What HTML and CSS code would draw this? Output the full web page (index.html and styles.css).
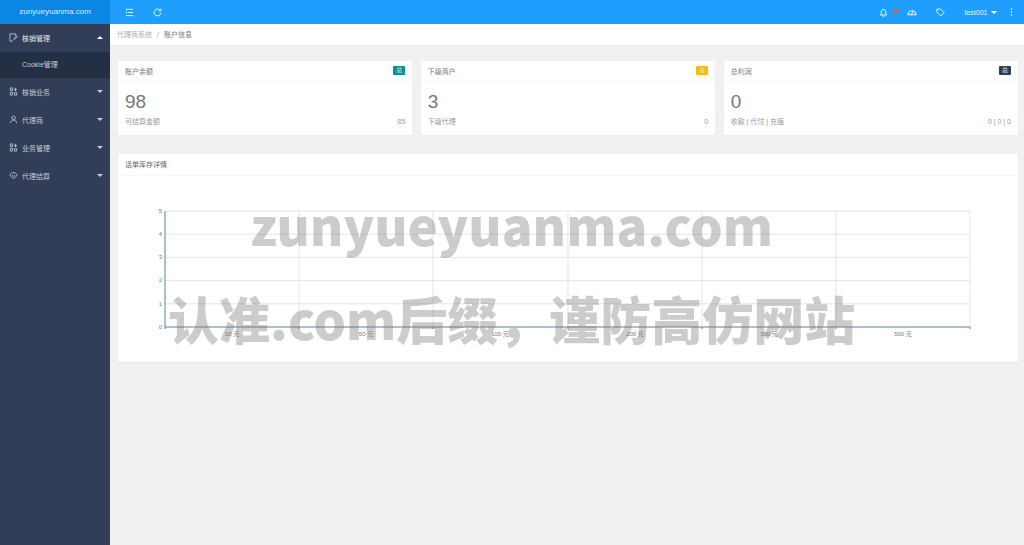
FILE: index.html
```html
<!DOCTYPE html>
<html lang="en">
<head>
  <meta charset="UTF-8">
  <meta name="viewport" content="width=device-width, initial-scale=1.0">
  <title>账户信息</title>
  <link rel="stylesheet" href="styles.css">
</head>
<body>

  <!-- Sidebar -->
  <aside class="sidebar">
    <div class="logo">zunyueyuanma.com</div>
    <ul class="menu">
      <li class="menu-item open">
        <svg class="menu-icon" viewBox="0 0 10 10"><path d="M7.500 3.500V1H1V9H4.500M5.500 6L8.500 3 9.500 4 6.500 7H5.500Z"/></svg>
        <span>核销管理</span><i class="caret up"></i>
      </li>
      <li class="menu-sub">Cookie管理</li>
      <li class="menu-item">
        <svg class="menu-icon" viewBox="0 0 10 10"><path d="M1.500 1H4V4H1.500ZM1.500 6H4V9H1.500ZM6 6H8.500V9H6ZM7.200 1V4.500M5.500 2.700H9"/></svg>
        <span>核销业务</span><i class="caret"></i>
      </li>
      <li class="menu-item">
        <svg class="menu-icon" viewBox="0 0 10 10"><circle cx="5" cy="3.200" r="2"/><path d="M1.500 9C1.800 6.800 3.200 5.800 5 5.800S8.200 6.800 8.500 9"/></svg>
        <span>代理商</span><i class="caret"></i>
      </li>
      <li class="menu-item">
        <svg class="menu-icon" viewBox="0 0 10 10"><path d="M1.500 1H4V4H1.500ZM1.500 6H4V9H1.500ZM6 6H8.500V9H6ZM7.200 1V4.500M5.500 2.700H9"/></svg>
        <span>业务管理</span><i class="caret"></i>
      </li>
      <li class="menu-item">
        <svg class="menu-icon" viewBox="0 0 10 10"><path d="M3 2H7L9.300 4.400 5 8.800 .7 4.400ZM3.300 4.500L5 6.200 6.700 4.500"/></svg>
        <span>代理结算</span><i class="caret"></i>
      </li>
    </ul>
  </aside>

  <div class="main">
    <!-- Top bar -->
    <header class="topbar">
      <svg class="top-icon menu-toggle" viewBox="0 0 10 10"><path d="M1 1.500H9M3.500 5H9M1 8.500H9M1 3.800L2.300 5 1 6.200"/></svg>
      <svg class="top-icon refresh" viewBox="0 0 10 10"><path d="M8.300 3A3.800 3.800 0 1 0 8.800 5.600M8.800 .8V3.300H6.300"/></svg>
      <div class="top-right">
        <svg class="top-icon bell" viewBox="0 0 10 10"><path d="M1.500 7.800H8.500L7.600 6.500V4.200A2.600 2.600 0 0 0 2.400 4.200V6.500ZM4 9.200H6"/></svg>
        <span class="dot"></span>
        <svg class="top-icon palette" viewBox="0 0 10 10"><path d="M1 7.800A4 4 0 0 1 9 7.800ZM4.200 7.500L6.500 4M2.700 6H2.900M3.800 4H4M7.200 6H7.400"/></svg>
        <svg class="top-icon tag" viewBox="0 0 10 10"><path d="M1 1.200H5L9 5.200 5.500 8.800 1 4.800ZM3 3H3.100"/></svg>
        <span class="user">test001</span><i class="caret user-caret"></i>
        <span class="more"><b></b><b></b><b></b></span>
      </div>
    </header>

    <nav class="breadcrumb">
      <span class="crumb">代理商系统</span><span class="crumb-sep">/</span><span class="crumb-now">账户信息</span>
    </nav>

    <div class="content">
      <div class="cards">
        <section class="card">
          <div class="card-head"><span>账户余额</span><em class="badge green">总</em></div>
          <div class="card-body">
            <p class="card-num">98</p>
            <div class="card-foot"><span>可结算金额</span><span>85</span></div>
          </div>
        </section>
        <section class="card">
          <div class="card-head"><span>下级商户</span><em class="badge yellow">总</em></div>
          <div class="card-body">
            <p class="card-num">3</p>
            <div class="card-foot"><span>下级代理</span><span>0</span></div>
          </div>
        </section>
        <section class="card">
          <div class="card-head"><span>总利润</span><em class="badge navy">总</em></div>
          <div class="card-body">
            <p class="card-num">0</p>
            <div class="card-foot"><span>收款 | 代付 | 充值</span><span>0 | 0 | 0</span></div>
          </div>
        </section>
      </div>

      <section class="card chart-card">
        <div class="card-head chart-head"><span>话单库存详情</span></div>
        <svg class="chart" viewBox="0 0 900 186">
          <g class="grid">
            <path d="M47 35H852M47 58.200H852M47 81.400H852M47 104.600H852M47 127.800H852"/>
            <path d="M181 35V151M315 35V151M450 35V151M584 35V151M718 35V151M852 35V151"/>
          </g>
          <g class="axis">
            <path d="M47 35V151M47 151H852"/>
            <path d="M181 151V153M315 151V153M450 151V153M584 151V153M718 151V153M852 151V153M47 151V153"/>
          </g>
          <g class="y-labels">
            <text x="44" y="37">5</text>
            <text x="44" y="60">4</text>
            <text x="44" y="83">3</text>
            <text x="44" y="106">2</text>
            <text x="44" y="130">1</text>
            <text x="44" y="153">0</text>
          </g>
          <g class="x-labels">
            <text x="114" y="160">30 元</text>
            <text x="248" y="160">50 元</text>
            <text x="382" y="160">100 元</text>
            <text x="517" y="160">200 元</text>
            <text x="651" y="160">300 元</text>
            <text x="785" y="160">500 元</text>
          </g>
        </svg>
      </section>
    </div>
  </div>

  <!-- Watermark over the page -->
  <div class="mark mark-top">zunyueyuanma.com</div>
  <div class="mark mark-bottom">认准.com后缀，谨防高仿网站</div>

</body>
</html>
```

FILE: styles.css
```css
* {
  box-sizing: border-box;
}

body {
  display: flex;
  height: 545px;
  margin: 0;
  overflow: hidden;
  font-family: "Liberation Sans", "Noto Sans CJK SC", sans-serif;
  font-size: 7px;
  color: #666;
  background-color: #f1f1f1;
}

/* Sidebar */
.sidebar {
  flex: 0 0 110px;
  background-color: #323e58;
}

.logo {
  height: 24px;
  line-height: 24px;
  text-align: center;
  font-size: 8px;
  color: #d8ecfb;
  background-color: #0c86e4;
}

.menu {
  margin: 0;
  padding: 0;
  list-style: none;
}

.menu-item {
  display: flex;
  align-items: center;
  height: 28px;
  padding: 0 7px 1px 9px;
  color: #c6cbd4;
}

.menu-item.open {
  color: #e6e8ec;
}

.menu-item span {
  flex: 1;
  margin-left: 4px;
}

.menu-icon {
  width: 9px;
  height: 9px;
  fill: none;
  stroke: #c6cbd4;
  stroke-width: 0.9;
}

.menu-sub {
  height: 26px;
  line-height: 26px;
  padding-left: 22px;
  color: #c6cbd4;
  background-color: #252f43;
}

.caret {
  width: 0;
  height: 0;
  border-left: 3.5px solid transparent;
  border-right: 3.5px solid transparent;
  border-top: 3.5px solid #c6cbd4;
}

.caret.up {
  border-top: 0;
  border-bottom: 3.5px solid #fff;
}

/* Top bar */
.main {
  flex: 1;
  min-width: 0;
}

.topbar {
  display: flex;
  align-items: center;
  height: 24px;
  padding: 0 12px 0 15px;
  color: #fff;
  background-color: #1e9fff;
}

.top-icon {
  width: 9px;
  height: 9px;
  fill: none;
  stroke: #e6f4ff;
  stroke-width: 1.100;
}

.refresh {
  margin-left: 19px;
}

.top-right {
  display: flex;
  align-items: center;
  margin-left: auto;
}

.dot {
  width: 4px;
  height: 4px;
  margin: 0 0 2px 5px;
  background-color: #ff5722;
  border-radius: 1px;
}

.palette {
  width: 10px;
  height: 10px;
  margin-left: 10px;
}

.tag {
  margin-left: 19px;
}

.user {
  margin-left: 20px;
  color: #e6f4ff;
}

.user-caret {
  margin-left: 3px;
  border-top-color: #fff;
}

.more {
  display: flex;
  flex-direction: column;
  gap: 1.500px;
  margin-left: 14px;
}

.more b {
  width: 1.500px;
  height: 1.500px;
  background-color: #e6f4ff;
}

/* Breadcrumb */
.breadcrumb {
  display: flex;
  align-items: center;
  height: 22px;
  padding-left: 7px;
  padding-bottom: 1px;
  background-color: #fff;
  border-bottom: 1px solid #eee;
}

.crumb {
  color: #aaa;
}

.crumb-sep {
  margin: 0 5px;
  color: #aaa;
}

.crumb-now {
  color: #777;
}

/* Cards */
.content {
  padding: 15px 6px 0 8px;
}

.cards {
  display: grid;
  grid-template-columns: repeat(3, 1fr);
  gap: 8.500px;
}

.card {
  background-color: #fff;
  box-shadow: 0 1px 2px rgba(0, 0, 0, 0.03);
}

.card-head {
  display: flex;
  justify-content: space-between;
  align-items: center;
  height: 21px;
  padding: 0 7px 1px;
  color: #777;
  border-bottom: 1px solid #f8f8f8;
}

.badge {
  width: 12px;
  height: 9px;
  line-height: 9px;
  text-align: center;
  font-style: normal;
  font-size: 6px;
  color: #dfe6e6;
  border-radius: 1px;
}

.green {
  background-color: #009688;
}

.yellow {
  background-color: #ffb800;
}

.navy {
  background-color: #2f4056;
}

.card-body {
  height: 53px;
  padding: 9px 7px 0;
}

.card-num {
  height: 22px;
  margin: 0;
  line-height: 22px;
  font-size: 19px;
  color: #777;
}

.card-foot {
  display: flex;
  justify-content: space-between;
  margin-top: 4px;
  line-height: 10px;
  color: #999;
}

/* Chart */
.chart-card {
  margin-top: 19px;
}

.chart-head {
  height: 22px;
  padding-bottom: 2px;
  color: #666;
}

.chart {
  display: block;
  width: 100%;
  height: 186px;
}

.grid path {
  fill: none;
  stroke: #dedede;
  stroke-width: 0.8;
}

.axis path {
  fill: none;
  stroke: #4d83b0;
  stroke-width: 1;
}

.y-labels text {
  font-size: 6px;
  fill: #777;
  text-anchor: end;
}

.x-labels text {
  font-size: 6px;
  fill: #777;
  text-anchor: middle;
}

/* Watermark */
.mark {
  position: absolute;
  white-space: nowrap;
  font-family: "Noto Sans CJK SC", sans-serif;
  font-weight: 900;
  color: rgba(120, 120, 120, 0.38);
}

.mark-top {
  left: 250px;
  top: 186px;
  font-size: 51px;
  line-height: 76px;
}

.mark-bottom {
  left: 168px;
  top: 281px;
  font-size: 51px;
  line-height: 74px;
}
```
